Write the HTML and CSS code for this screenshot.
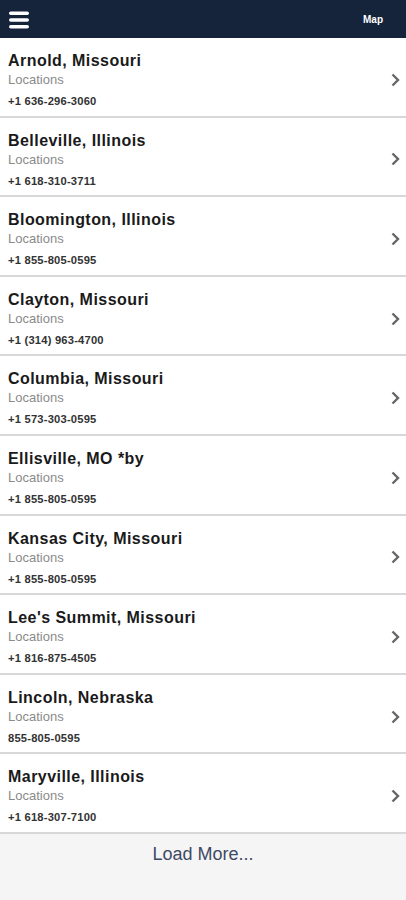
FILE: index.html
```html
<!DOCTYPE html>
<html>
<head>
<meta charset="utf-8">
<link rel="stylesheet" href="styles.css">
</head>
<body>
<header class="topbar">
  <svg class="menu" width="20" height="18" viewBox="0 0 20 18"><rect x="0" y="0.5" width="20" height="3.6" rx="1.8" fill="#fff"/><rect x="0" y="7.2" width="20" height="3.6" rx="1.8" fill="#fff"/><rect x="0" y="13.9" width="20" height="3.6" rx="1.8" fill="#fff"/></svg>
  <span class="map">Map</span>
</header>
<ul class="list">
  <li class="row"><div class="info"><div class="title">Arnold, Missouri</div><div class="cat">Locations</div><div class="phone">+1 636-296-3060</div></div><svg class="chev" width="9" height="14" viewBox="0 0 9 14"><path d="M1.5 1.5 L7 7 L1.5 12.5" fill="none" stroke="#666" stroke-width="2.4"/></svg></li>
  <li class="row"><div class="info"><div class="title">Belleville, Illinois</div><div class="cat">Locations</div><div class="phone">+1 618-310-3711</div></div><svg class="chev" width="9" height="14" viewBox="0 0 9 14"><path d="M1.5 1.5 L7 7 L1.5 12.5" fill="none" stroke="#666" stroke-width="2.4"/></svg></li>
  <li class="row"><div class="info"><div class="title">Bloomington, Illinois</div><div class="cat">Locations</div><div class="phone">+1 855-805-0595</div></div><svg class="chev" width="9" height="14" viewBox="0 0 9 14"><path d="M1.5 1.5 L7 7 L1.5 12.5" fill="none" stroke="#666" stroke-width="2.4"/></svg></li>
  <li class="row"><div class="info"><div class="title">Clayton, Missouri</div><div class="cat">Locations</div><div class="phone">+1 (314) 963-4700</div></div><svg class="chev" width="9" height="14" viewBox="0 0 9 14"><path d="M1.5 1.5 L7 7 L1.5 12.5" fill="none" stroke="#666" stroke-width="2.4"/></svg></li>
  <li class="row"><div class="info"><div class="title">Columbia, Missouri</div><div class="cat">Locations</div><div class="phone">+1 573-303-0595</div></div><svg class="chev" width="9" height="14" viewBox="0 0 9 14"><path d="M1.5 1.5 L7 7 L1.5 12.5" fill="none" stroke="#666" stroke-width="2.4"/></svg></li>
  <li class="row"><div class="info"><div class="title">Ellisville, MO *by</div><div class="cat">Locations</div><div class="phone">+1 855-805-0595</div></div><svg class="chev" width="9" height="14" viewBox="0 0 9 14"><path d="M1.5 1.5 L7 7 L1.5 12.5" fill="none" stroke="#666" stroke-width="2.4"/></svg></li>
  <li class="row"><div class="info"><div class="title">Kansas City, Missouri</div><div class="cat">Locations</div><div class="phone">+1 855-805-0595</div></div><svg class="chev" width="9" height="14" viewBox="0 0 9 14"><path d="M1.5 1.5 L7 7 L1.5 12.5" fill="none" stroke="#666" stroke-width="2.4"/></svg></li>
  <li class="row"><div class="info"><div class="title">Lee's Summit, Missouri</div><div class="cat">Locations</div><div class="phone">+1 816-875-4505</div></div><svg class="chev" width="9" height="14" viewBox="0 0 9 14"><path d="M1.5 1.5 L7 7 L1.5 12.5" fill="none" stroke="#666" stroke-width="2.4"/></svg></li>
  <li class="row"><div class="info"><div class="title">Lincoln, Nebraska</div><div class="cat">Locations</div><div class="phone">855-805-0595</div></div><svg class="chev" width="9" height="14" viewBox="0 0 9 14"><path d="M1.5 1.5 L7 7 L1.5 12.5" fill="none" stroke="#666" stroke-width="2.4"/></svg></li>
  <li class="row"><div class="info"><div class="title">Maryville, Illinois</div><div class="cat">Locations</div><div class="phone">+1 618-307-7100</div></div><svg class="chev" width="9" height="14" viewBox="0 0 9 14"><path d="M1.5 1.5 L7 7 L1.5 12.5" fill="none" stroke="#666" stroke-width="2.4"/></svg></li>
</ul>
<div class="more">Load More...</div>
</body>
</html>
```
FILE: styles.css
```css
html, body {
  margin: 0;
  padding: 0;
  background: #f5f5f5;
  font-family: "Liberation Sans", Arial, sans-serif;
}
.topbar {
  height: 38px;
  background: #15233b;
  display: flex;
  align-items: center;
  justify-content: space-between;
  padding: 0 23px 0 9px;
  box-sizing: border-box;
}
.menu {
  display: block;
  margin-top: 1px;
}
.map {
  color: #fff;
  font-size: 10px;
  font-weight: bold;
  margin-top: 1px;
}
.list {
  list-style: none;
  margin: 0;
  padding: 0;
  background: #fff;
}
.row {
  height: 77.6px;
  border-bottom: 2px solid #d8d8d8;
  display: flex;
  align-items: center;
  justify-content: space-between;
  padding: 0 6px 0 8px;
  box-sizing: content-box;
}
.info {
  display: flex;
  flex-direction: column;
  margin-top: 6.5px;
}
.title {
  font-size: 16px;
  font-weight: bold;
  color: #1a1a1a;
  line-height: 18px;
  letter-spacing: 0.45px;
}
.cat {
  font-size: 13px;
  color: #8a8a8a;
  line-height: 18px;
  margin-top: 1px;
}
.phone {
  font-size: 11.2px;
  font-weight: bold;
  color: #333;
  line-height: 14px;
  margin-top: 5px;
  letter-spacing: 0.2px;
}
.chev {
  display: block;
  margin-top: 6px;
}
.more {
  text-align: center;
  color: #3d4a66;
  font-size: 18px;
  padding-top: 9px;
  line-height: 22px;
}
```
